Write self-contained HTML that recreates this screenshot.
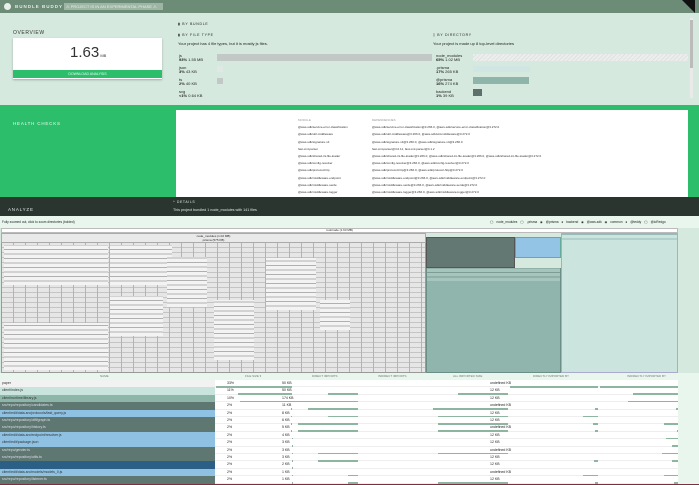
<!DOCTYPE html>
<html><head><meta charset="utf-8"><style>
*{margin:0;padding:0;box-sizing:border-box}
body{width:699px;height:485px;overflow:hidden;background:#d5e9de;font-family:"Liberation Sans",sans-serif;position:relative;color:#222}
.a{position:absolute}
.t{font-size:4px;white-space:nowrap}
.gp{background:repeating-linear-gradient(90deg,transparent 0 11px,#b3b3b3 11px 12px),repeating-linear-gradient(0deg,#e6e6e6 0 4px,#c4c4c4 4px 5px)}
.ls{background:repeating-linear-gradient(0deg,#f3f3f3 0 3.5px,#b0b0b0 3.5px 4.5px)}
.row{position:absolute;left:0;width:678px;height:7.4px;font-size:3.5px;line-height:7.4px}
.bar{position:absolute;height:1.5px;background:#8db5a0}
</style></head><body>
<div class="a" style="left:0;top:0;width:699px;height:13px;background:#6c8c78"></div>
<div class="a" style="left:4px;top:3px;width:7px;height:7px;border-radius:50%;background:#e8efe9"></div>
<div class="a t" style="left:15px;top:4px;color:#e3ece5;font-size:4.5px;letter-spacing:1px;font-weight:bold">BUNDLE BUDDY</div>
<div class="a t" style="left:64px;top:3px;height:7px;width:99px;background:#9db5a3;color:#e8efe9;line-height:7px;padding-left:2px">⚠ PROJECT IS IN AN EXPERIMENTAL PHASE ⚠</div>
<div class="a" style="left:682px;top:0;width:0;height:0;border-top:13px solid #111;border-left:13px solid transparent"></div>
<div class="a" style="left:690px;top:18px;width:3px;height:80px;background:#eaeaea"></div>
<div class="a" style="left:690px;top:20px;width:3px;height:48px;background:#bbb"></div>
<div class="a t" style="left:13px;top:30px;font-size:5px;letter-spacing:.6px;color:#333">OVERVIEW</div>
<div class="a" style="left:13px;top:38px;width:149px;height:41px;background:#fff;box-shadow:0 1px 2px rgba(0,0,0,.25)"></div>
<div class="a" style="left:70px;top:44px;font-size:15px;color:#333;font-weight:300">1.63<span style="font-size:4px"> MB</span></div>
<div class="a t" style="left:13px;top:70px;width:149px;height:8px;background:#2dbe6c;color:#e8fff0;text-align:center;line-height:8px;font-size:3.5px">DOWNLOAD ANALYSIS</div>
<div class="a t" style="left:178px;top:22px;font-size:3.5px;letter-spacing:.7px">▮ BY BUNDLE</div>
<div class="a t" style="left:178px;top:33px;font-size:3.5px;letter-spacing:.7px">▮ BY FILE TYPE</div>
<div class="a t" style="left:178px;top:41px">Your project has 4 file types, but it is mostly js files.</div>
<div class="a t" style="left:179px;top:54px;line-height:4px">js<br><b>93%</b> 1.55 MB</div>
<div class="a" style="left:217px;top:54px;width:215px;height:7px;background:#c1c8c6"></div>
<div class="a t" style="left:179px;top:66px;line-height:4px">json<br><b>3%</b> 43 KB</div>
<div class="a" style="left:217px;top:66px;width:6px;height:6px;background:#e0e8e3"></div>
<div class="a t" style="left:179px;top:78px;line-height:4px">ts<br><b>2%</b> 40 KB</div>
<div class="a" style="left:217px;top:78px;width:6px;height:6px;background:#c1c8c6"></div>
<div class="a t" style="left:179px;top:90px;line-height:4px">svg<br><b>&lt;1%</b> 0.64 KB</div>
<div class="a t" style="left:433px;top:33px;font-size:3.5px;letter-spacing:.7px">▯ BY DIRECTORY</div>
<div class="a t" style="left:433px;top:41px">Your project is made up 8 top-level directories</div>
<div class="a t" style="left:436px;top:54px;line-height:4px">node_modules<br><b>65%</b> 1.02 MB</div>
<div class="a" style="left:473px;top:54px;width:215px;height:7px;background:repeating-linear-gradient(135deg,#eceeed 0 2px,#dfe2e0 2px 3px)"></div>
<div class="a t" style="left:436px;top:66px;line-height:4px">.prisma<br><b>17%</b> 265 KB</div>
<div class="a" style="left:473px;top:66px;width:57px;height:6px;background:#cfe6e2"></div>
<div class="a t" style="left:436px;top:78px;line-height:4px">@prisma<br><b>16%</b> 274 KB</div>
<div class="a" style="left:473px;top:77px;width:56px;height:7px;background:#8fb5ab"></div>
<div class="a t" style="left:436px;top:90px;line-height:4px">backend<br><b>1%</b> 39 KB</div>
<div class="a" style="left:473px;top:89px;width:9px;height:7px;background:#5d706b"></div>
<div class="a" style="left:0;top:105px;width:699px;height:93px;background:#2dbe6c"></div>
<div class="a t" style="left:13px;top:121px;color:#e8fff0;font-size:4.5px;letter-spacing:.8px">HEALTH CHECKS</div>
<div class="a" style="left:176px;top:110px;width:512px;height:88px;background:#fff"></div>
<div class="a" style="left:298px;top:117px;font-size:3px;line-height:7.2px;color:#333;white-space:nowrap">
<div style="color:#999">MODULE</div>
@aws-sdk/service-error-classification<br>@aws-sdk/util-middleware<br>@aws-sdk/signature-v4<br>fast-xml-parser<br>@aws-sdk/shared-ini-file-loader<br>@aws-sdk/config-resolver<br>@aws-sdk/protocol-http<br>@aws-sdk/middleware-endpoint<br>@aws-sdk/middleware-serde<br>@aws-sdk/middleware-logger<br>@aws-sdk/util-retry</div>
<div class="a" style="left:372px;top:117px;font-size:3px;line-height:7.2px;color:#333;white-space:nowrap">
<div style="color:#999">DEPENDENCIES</div>
@aws-sdk/service-error-classification@3.266.0, @aws-sdk/service-error-classification@3.272.0<br>@aws-sdk/util-middleware@3.266.0, @aws-sdk/util-middleware@3.272.0<br>@aws-sdk/signature-v4@3.266.0, @aws-sdk/signature-v4@3.266.0<br>fast-xml-parser@4.0.11, fast-xml-parser@4.1.2<br>@aws-sdk/shared-ini-file-loader@3.266.0, @aws-sdk/shared-ini-file-loader@3.266.0, @aws-sdk/shared-ini-file-loader@3.272.0<br>@aws-sdk/config-resolver@3.266.0, @aws-sdk/config-resolver@3.272.0<br>@aws-sdk/protocol-http@3.266.0, @aws-sdk/protocol-http@3.272.0<br>@aws-sdk/middleware-endpoint@3.266.0, @aws-sdk/middleware-endpoint@3.272.0<br>@aws-sdk/middleware-serde@3.266.0, @aws-sdk/middleware-serde@3.272.0<br>@aws-sdk/middleware-logger@3.266.0, @aws-sdk/middleware-logger@3.272.0<br>@aws-sdk/util-retry@3.266.0, @aws-sdk/util-retry@3.272.0</div>
<div class="a" style="left:0;top:197px;width:699px;height:19px;background:#2a3530"></div>
<div class="a t" style="left:8px;top:207px;color:#e0e8e3;font-size:4.5px;letter-spacing:.8px">ANALYZE</div>
<div class="a t" style="left:173px;top:200px;color:#e0e8e3;font-size:3.5px;letter-spacing:.6px">^ DETAILS</div>
<div class="a t" style="left:173px;top:208px;color:#e0e8e3;font-size:3.7px">This project bundled 1 node_modules with 141 files</div>
<div class="a" style="left:0;top:216px;width:699px;height:12px;background:#e8f6ee"></div>
<div class="a t" style="left:2px;top:220px;font-size:3.2px">Fully zoomed out, click to zoom directories (bolded)</div>
<div class="a t" style="left:490px;top:220px;font-size:3.2px;word-spacing:2px">◯ node_modules ◯ .prisma ◉ @prisma ● backend ◉ @aws-sdk ◉ common ● @teddy ◯ @ioRedgo</div>
<div class="a" style="left:1px;top:228px;width:677px;height:5px;background:#fff;border:1px solid #bbb;font-size:3px;text-align:center;line-height:3px">root/node (1.63 MB)</div>
<div class="a gp" style="left:1px;top:233px;width:425px;height:140px;border:1px solid #999;background-color:#d0d0d0"></div>
<div class="a" style="left:1px;top:233px;width:425px;height:10px;background:#e9e9e9;border:1px solid #aaa;font-size:3px;text-align:center;line-height:4px">node_modules (1.02 MB)<br>prisma (575 KB)</div>
<div class="a ls" style="left:4px;top:245px;width:104px;height:40px"></div>
<div class="a ls" style="left:110px;top:245px;width:62px;height:40px"></div>
<div class="a ls" style="left:110px;top:296px;width:53px;height:40px"></div>
<div class="a ls" style="left:4px;top:323px;width:104px;height:47px"></div>
<div class="a ls" style="left:266px;top:258px;width:50px;height:52px"></div>
<div class="a ls" style="left:167px;top:257px;width:40px;height:50px"></div>
<div class="a ls" style="left:214px;top:300px;width:40px;height:60px"></div>
<div class="a ls" style="left:320px;top:300px;width:30px;height:30px"></div>
<div class="a" style="left:426px;top:237px;width:89px;height:31px;background:#637872;border:1px solid #555"></div>
<div class="a" style="left:515px;top:237px;width:46px;height:21px;background:#93c4e6;border:1px solid #6a9"></div>
<div class="a" style="left:426px;top:268px;width:135px;height:105px;background:#8fb5ac;border:1px solid #6b8e86"></div>
<div class="a" style="left:427px;top:268px;width:133px;height:13px;background:repeating-linear-gradient(0deg,#a5c5bd 0 3.5px,#7c9c94 3.5px 4.5px)"></div>
<div class="a" style="left:561px;top:233px;width:117px;height:140px;background:#cbe4de;border:1px solid #aac"></div>
<div class="a" style="left:562px;top:234px;width:115px;height:9px;background:repeating-linear-gradient(0deg,#cbe4de 0 3.5px,#9bb 3.5px 4.5px)"></div>
<div class="a" style="left:0;top:373px;width:699px;height:112px;background:#fff"></div>
<div class="a" style="left:0;top:373px;width:678px;height:7px;background:#e8f6ee;font-size:3px;line-height:7px;color:#777;white-space:nowrap">
<span class="a" style="left:100px">NAME</span><span class="a" style="left:245px">FILE SIZE ▾</span><span class="a" style="left:312px">DIRECT IMPORTS</span><span class="a" style="left:378px">INDIRECT IMPORTS</span><span class="a" style="left:453px">ALL IMPORTED SIZE</span><span class="a" style="left:533px">DIRECTLY IMPORTED BY</span><span class="a" style="left:627px">INDIRECTLY IMPORTED BY</span></div>
<div class="a" style="left:678px;top:373px;width:21px;height:112px;background:#e8f6ee"></div>
<div id="rows"></div>
<script>
var names=["paper","client/index.js","client/runtime/library.js","src/repo/repository/candidates.ts","client/edit/data-src/protocols/fast_query.js","src/repo/repository/diff/graph.ts","src/repo/repository/history.ts","client/edit/data-src/endpoint/resolver.js","client/edit/package.json","src/repo/gender.ts","src/repo/repository/utils.ts","<anonymous>","client/edit/data-src/models/models_0.js","src/repo/repository/listener.ts"];
var cols=["#f2f2f2","#c9e3dd","#8db5a8","#5f7771","#8fc1e3","#5f7771","#5f7771","#8fc1e3","#8fc1e3","#5f7771","#5f7771","#2c5f85","#8fc1e3","#5f7771"];
var h="";
for(var i=0;i<14;i++){var y=380+i*7.4;
h+='<div class="row" style="top:'+y+'px;border-bottom:1px solid #eee"><div style="position:absolute;left:0;width:215px;height:7.4px;background:'+cols[i]+';padding-left:2px;color:'+(cols[i]=="#2c5f85"||cols[i]=="#5f7771"?"#dde":"#333")+'">'+names[i]+'</div>'+
'<span style="position:absolute;left:227px">'+(i<3?["33%","11%","10%"][i]:"2%")+'</span><span style="position:absolute;left:282px">'+["50 KB","50 KB","174 KB","11 KB","8 KB","6 KB","5 KB","4 KB","3 KB","3 KB","3 KB","2 KB","1 KB","1 KB"][i]+'</span>'+
'<span style="position:absolute;left:490px">'+(i%3==0?"undefined KB":"12 KB")+'</span></div>';
var w=[170,120,115,2,2,2,2,1,1,1,1,1,1,1][i];h+='<div class="bar" style="left:'+(292-w*0.45)+'px;top:'+(y+6)+'px;width:'+(w*0.45)+'px"></div>';
var d=[0,30,70,50,30,60,60,0,0,40,40,0,10,10][i];if(d)h+='<div class="bar" style="left:'+(358-d)+'px;top:'+(y+6)+'px;width:'+d+'px"></div>';
var a=[0,50,0,75,70,70,70,0,0,70,0,0,0,70][i];if(a)h+='<div class="bar" style="left:'+(508-a)+'px;top:'+(y+6)+'px;width:'+a+'px"></div>';
var b=[88,0,0,3,15,5,3,0,0,0,4,0,15,3][i];if(b)h+='<div class="bar" style="left:'+(598-b)+'px;top:'+(y+6)+'px;width:'+b+'px"></div>';
var c=[78,45,50,2,0,14,1,12,6,16,6,0,14,4][i];if(c)h+='<div class="bar" style="left:'+(678-c)+'px;top:'+(y+6)+'px;width:'+c+'px"></div>';}
document.getElementById("rows").innerHTML=h;
</script>
<div class="a" style="left:0;top:484px;width:699px;height:1px;background:#7a3040"></div>
</body></html>
